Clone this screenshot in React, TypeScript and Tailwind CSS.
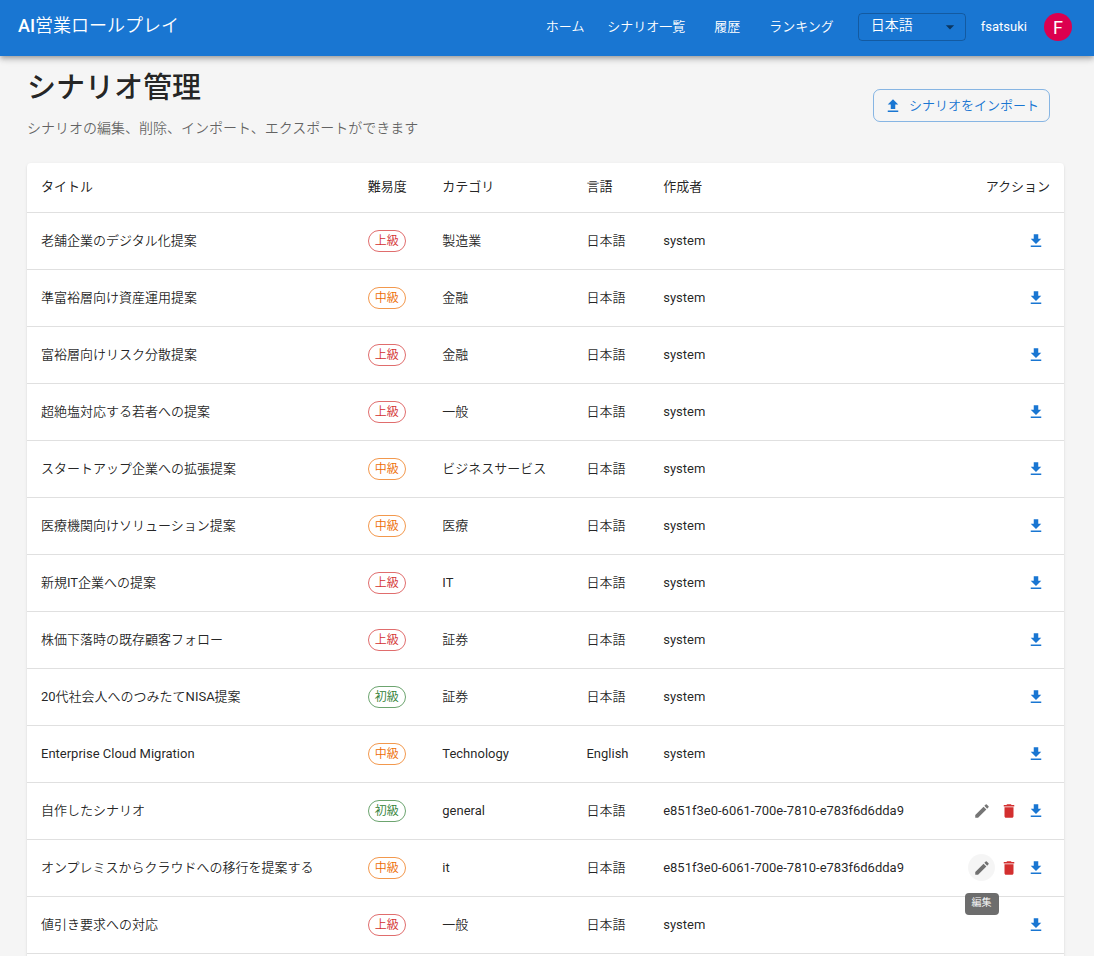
import React, { useState } from "react";

type Level = "初級" | "中級" | "上級";

interface Scenario {
  title: string;
  level: Level;
  category: string;
  language: string;
  author: string;
  editable?: boolean;
  active?: boolean;
}

const OWNER_ID = "e851f3e0-6061-700e-7810-e783f6d6dda9";

const scenarios: Scenario[] = [
  { title: "老舗企業のデジタル化提案", level: "上級", category: "製造業", language: "日本語", author: "system" },
  { title: "準富裕層向け資産運用提案", level: "中級", category: "金融", language: "日本語", author: "system" },
  { title: "富裕層向けリスク分散提案", level: "上級", category: "金融", language: "日本語", author: "system" },
  { title: "超絶塩対応する若者への提案", level: "上級", category: "一般", language: "日本語", author: "system" },
  { title: "スタートアップ企業への拡張提案", level: "中級", category: "ビジネスサービス", language: "日本語", author: "system" },
  { title: "医療機関向けソリューション提案", level: "中級", category: "医療", language: "日本語", author: "system" },
  { title: "新規IT企業への提案", level: "上級", category: "IT", language: "日本語", author: "system" },
  { title: "株価下落時の既存顧客フォロー", level: "上級", category: "証券", language: "日本語", author: "system" },
  { title: "20代社会人へのつみたてNISA提案", level: "初級", category: "証券", language: "日本語", author: "system" },
  { title: "Enterprise Cloud Migration", level: "中級", category: "Technology", language: "English", author: "system" },
  { title: "自作したシナリオ", level: "初級", category: "general", language: "日本語", author: OWNER_ID, editable: true },
  { title: "オンプレミスからクラウドへの移行を提案する", level: "中級", category: "it", language: "日本語", author: OWNER_ID, editable: true, active: true },
  { title: "値引き要求への対応", level: "上級", category: "一般", language: "日本語", author: "system" },
];

const levelStyles: Record<Level, string> = {
  初級: "border-[#2e7d32]/70 text-[#2e7d32]",
  中級: "border-[#ed6c02]/70 text-[#ed6c02]",
  上級: "border-[#d32f2f]/70 text-[#d32f2f]",
};

const icons = {
  download: "M5 20h14v-2H5zM19 9h-4V3H9v6H5l7 7z",
  upload: "M5 20h14v-2H5zm0-10h4v6h6v-6h4l-7-7z",
  trash: "M6 19c0 1.1.9 2 2 2h8c1.1 0 2-.9 2-2V7H6zM19 4h-3.5l-1-1h-5l-1 1H5v2h14z",
  edit: "M3 17.25V21h3.75L17.81 9.94l-3.75-3.75zM20.71 7.04c.39-.39.39-1.02 0-1.41l-2.34-2.34a.9959.9959 0 0 0-1.41 0l-1.83 1.83 3.75 3.75z",
  caret: "m7 10 5 5 5-5z",
};

function Icon({ name, className }: { name: keyof typeof icons; className: string }) {
  return (
    <svg viewBox="0 0 24 24" fill="currentColor" aria-hidden="true" className={className}>
      <path d={icons[name]} />
    </svg>
  );
}

function IconButton({
  icon,
  label,
  color,
  active = false,
}: {
  icon: keyof typeof icons;
  label: string;
  color: string;
  active?: boolean;
}) {
  return (
    <span className="relative inline-flex">
      <button
        type="button"
        aria-label={label}
        className={`flex size-[27px] items-center justify-center rounded-full hover:bg-black/5 ${color} ${active ? "bg-black/4" : ""}`}
      >
        <Icon name={icon} className="size-[18px] shrink-0" />
      </button>
      {active && (
        <span
          role="tooltip"
          className="absolute top-full left-1/2 z-10 mt-3 h-[22px] -translate-x-1/2 rounded bg-[#616161]/92 px-[7px] text-[10px] leading-[19px] whitespace-nowrap text-white"
        >
          {label}
        </span>
      )}
    </span>
  );
}

function Header() {
  const [language, setLanguage] = useState("ja");
  return (
    <header className="relative z-10 flex h-14 items-center bg-[#1976d2] pr-[22px] pb-0.5 pl-[18px] text-white shadow-[0_2px_4px_-1px_rgba(0,0,0,0.2),0_4px_5px_0_rgba(0,0,0,0.14),0_1px_10px_0_rgba(0,0,0,0.12)]">
      <div className="flex-1 pb-0.5 text-[18px] leading-7 font-medium">AI営業ロールプレイ</div>
      <nav className="mr-[18px] flex gap-2 text-[13px] leading-6">
        {["ホーム", "シナリオ一覧", "履歴", "ランキング"].map((item) => (
          <a key={item} href="#" className="min-w-14 px-1.5 text-center">
            {item}
          </a>
        ))}
      </nav>
      <div className="relative mr-[15px] w-[108px]">
        <select
          aria-label="言語"
          value={language}
          onChange={(e) => setLanguage(e.target.value)}
          className="block h-7 w-full appearance-none rounded border border-black/23 bg-transparent pb-1 pl-3 text-[14px] text-white"
        >
          <option value="ja">日本語</option>
          <option value="en">English</option>
        </select>
        <Icon name="caret" className="pointer-events-none absolute top-1 right-1.5 size-5 text-black/54" />
      </div>
      <span className="mr-[17px] text-[13px] leading-6">fsatsuki</span>
      <div className="flex size-7 items-center justify-center rounded-full bg-[#dc004e] text-[18px]">F</div>
    </header>
  );
}

export default function App() {
  return (
    <div className="min-h-screen bg-[#f5f5f5] font-['Roboto','Noto_Sans_CJK_JP_DemiLight','Noto_Sans_CJK_JP_Light','Noto_Sans_CJK_JP',sans-serif] text-black/87">
      <Header />
      <main className="pt-3.5 pr-[30px] pb-8 pl-[27px]">
        <div className="mb-[22px] flex items-center justify-between pr-[14px]">
          <div>
            <h1 className="font-['Roboto','Noto_Sans_CJK_JP',sans-serif] text-[29px] leading-9 font-medium">
              シナリオ管理
            </h1>
            <p className="mt-3 mb-[3px] text-[14px] leading-5 text-black/60">
              シナリオの編集、削除、インポート、エクスポートができます
            </p>
          </div>
          <button
            type="button"
            className="flex h-[33px] items-center gap-[7px] rounded-[7px] border border-[#1976d2]/50 px-2.5 text-[13px] text-[#1976d2]"
          >
            <Icon name="upload" className="size-[18px]" />
            シナリオをインポート
          </button>
        </div>

        <div className="rounded bg-white pb-14 shadow-[0_2px_1px_-1px_rgba(0,0,0,0.1),0_1px_1px_0_rgba(0,0,0,0.08),0_1px_3px_0_rgba(0,0,0,0.1)]">
          <table className="w-full table-fixed border-collapse text-left text-[13px] leading-5">
            <colgroup>
              <col className="w-[31.5%]" />
              <col className="w-[7.2%]" />
              <col className="w-[13.9%]" />
              <col className="w-[7.4%]" />
              <col className="w-[26%]" />
              <col className="w-[14%]" />
            </colgroup>
            <thead className="font-['Roboto','Noto_Sans_CJK_JP',sans-serif]">
              <tr className="h-[49px] border-b border-[#e0e0e0]">
                {["タイトル", "難易度", "カテゴリ", "言語", "作成者"].map((label) => (
                  <th key={label} scope="col" className="px-[14px] font-normal whitespace-nowrap">
                    {label}
                  </th>
                ))}
                <th scope="col" className="px-[14px] text-right font-normal">
                  アクション
                </th>
              </tr>
            </thead>
            <tbody>
              {scenarios.map((s) => (
                <tr key={s.title} className="h-[57px] border-b border-[#e0e0e0]">
                  <td className="px-[14px]">{s.title}</td>
                  <td className="px-[14px]">
                    <span
                      className={`flex h-[22px] w-[38px] items-center justify-center rounded-full border text-[12px] leading-5 whitespace-nowrap ${levelStyles[s.level]}`}
                    >
                      {s.level}
                    </span>
                  </td>
                  <td className="px-[14px]">{s.category}</td>
                  <td className="px-[14px] whitespace-nowrap">{s.language}</td>
                  <td className="px-[14px] whitespace-nowrap">{s.author}</td>
                  <td className="px-[15px]">
                    <div className="flex justify-end">
                      {s.editable && (
                        <>
                          <IconButton icon="edit" label="編集" color="text-black/54" active={s.active} />
                          <IconButton icon="trash" label="削除" color="text-[#d32f2f]" />
                        </>
                      )}
                      <IconButton icon="download" label="エクスポート" color="text-[#1976d2]" />
                    </div>
                  </td>
                </tr>
              ))}
            </tbody>
          </table>
        </div>
      </main>
    </div>
  );
}
